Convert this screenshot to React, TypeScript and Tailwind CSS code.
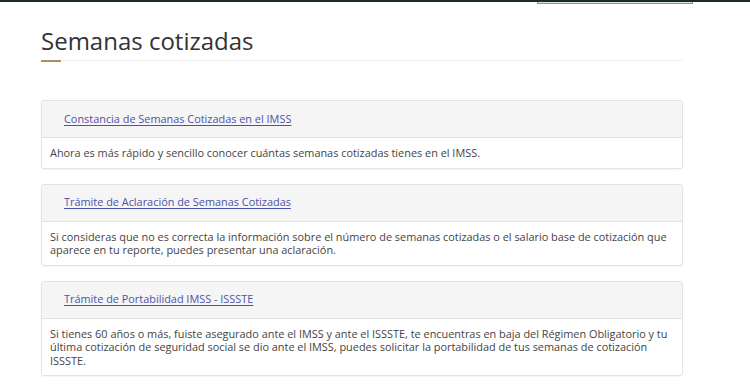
import React from "react";

const tramites = [
  {
    title: "Constancia de Semanas Cotizadas en el IMSS",
    text: "Ahora es más rápido y sencillo conocer cuántas semanas cotizadas tienes en el IMSS.",
  },
  {
    title: "Trámite de Aclaración de Semanas Cotizadas",
    text: "Si consideras que no es correcta la información sobre el número de semanas cotizadas o el salario base de cotización que aparece en tu reporte, puedes presentar una aclaración.",
  },
  {
    title: "Trámite de Portabilidad IMSS - ISSSTE",
    text: "Si tienes 60 años o más, fuiste asegurado ante el IMSS y ante el ISSSTE, te encuentras en baja del Régimen Obligatorio y tu última cotización de seguridad social se dio ante el IMSS, puedes solicitar la portabilidad de tus semanas de cotización ISSSTE.",
  },
];

export default function App() {
  return (
    <div className="w-[750px] h-[388px] overflow-hidden bg-white font-['Open_Sans',sans-serif]">
      {/* Top bar (bottom edge of the header) */}
      <div className="h-[2px] bg-[#1c2b25]" />
      <div className="flex">
        <div className="ml-[537px] w-[156px] h-[2px] border-x border-b border-[#8a938f] bg-[#dfe3e1]" />
      </div>

      <div className="ml-[41px] w-[642px]">
        {/* Heading */}
        <h1 className="mt-[22px] text-[24px] leading-[30px] font-medium text-[#333333]">
          Semanas cotizadas
        </h1>
        <div className="mt-[4px] flex items-start">
          <div className="w-[20px] h-[2px] bg-[#b38e5d]" />
          <div className="flex-1 h-[1px] bg-[#ededed]" />
        </div>

        {/* Cards */}
        <div className="mt-[38px] flex flex-col gap-[15px]">
          {tramites.map((t, i) => (
            <div
              key={i}
              className="rounded-[3px] border border-[#e3e3e3] bg-white shadow-[0_1px_1px_rgba(0,0,0,0.04)]"
            >
              <div className="h-[37px] flex items-center pl-[22px] bg-[#f5f5f5] border-b border-[#e3e3e3] rounded-t-[3px]">
                <a
                  href="#"
                  className="text-[10.9px] text-[#4d52a6] underline underline-offset-[2px]"
                >
                  {t.title}
                </a>
              </div>
              <p className="px-[8px] py-[8px] text-[10.9px] leading-[13.5px] text-[#444444]">
                {t.text}
              </p>
            </div>
          ))}
        </div>
      </div>
    </div>
  );
}
